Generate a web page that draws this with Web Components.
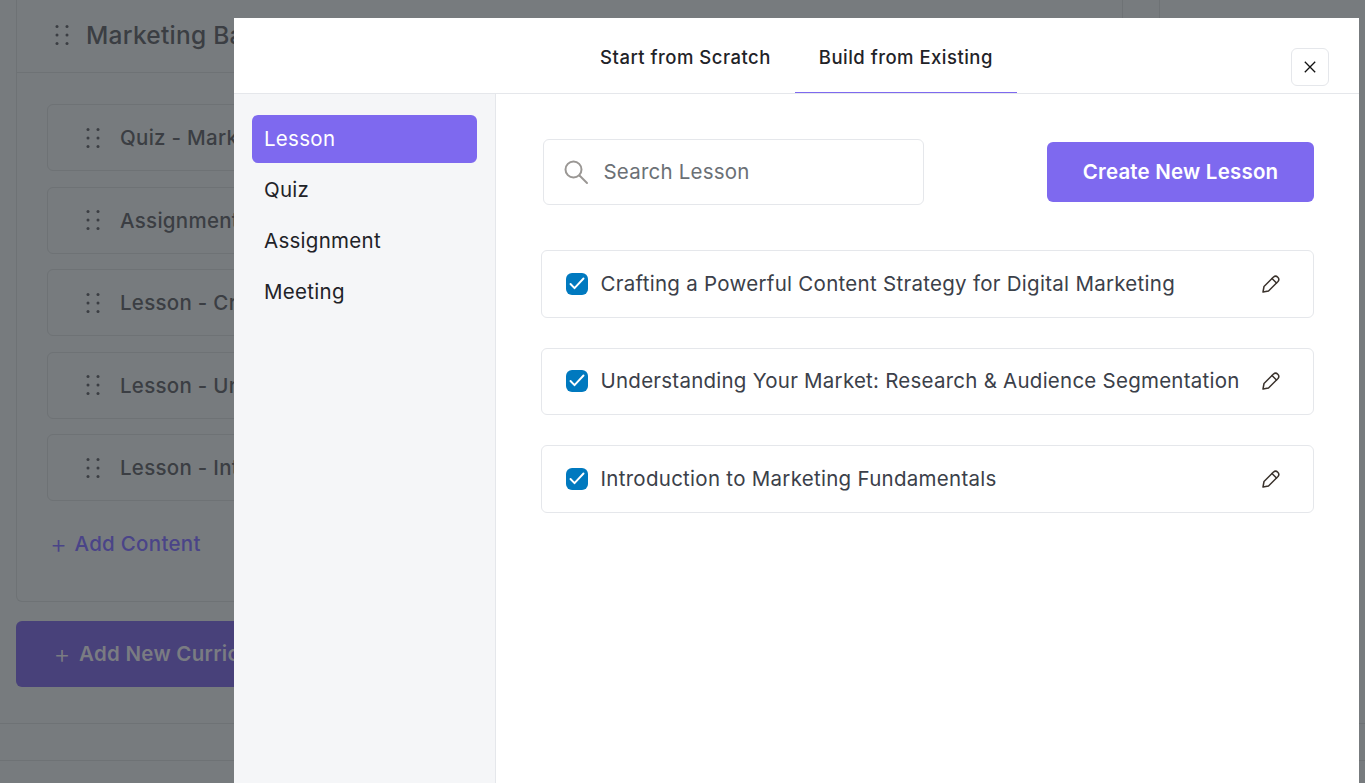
<!DOCTYPE html>
<html><head><meta charset="utf-8">
<style>
html,body{margin:0;padding:0;height:100%;overflow:hidden;background:#777b7e;font-family:Inter,"Liberation Sans",sans-serif}
</style></head><body>
<app-root></app-root>
<template id="dots"><svg width="14" height="22" viewBox="0 0 14 22" fill="currentColor"><circle cx="2" cy="2.500" r="1.500"/><circle cx="12" cy="2.500" r="1.500"/><circle cx="2" cy="11" r="1.500"/><circle cx="12" cy="11" r="1.500"/><circle cx="2" cy="19.500" r="1.500"/><circle cx="12" cy="19.500" r="1.500"/></svg></template>
<script>
const dots=document.getElementById('dots').innerHTML;
const def=(n,css,html)=>{customElements.define(n,class extends HTMLElement{
  connectedCallback(){ if(this.shadowRoot) return; const r=this.attachShadow({mode:'open'}); r.innerHTML=`<style>${css}</style>`+html;}
});};
def('bg-item',`:host{display:flex;align-items:center;box-sizing:border-box;height:67px;margin-left:30px;border:1px solid #6e7275;border-radius:6px;padding-left:38px;gap:20px;color:#3b3e43;font-size:20.500px;font-weight:500;letter-spacing:.28px;white-space:nowrap;width:600px}
span{display:flex;color:#3b3e43}`,`<span>${dots}</span><slot></slot>`);
def('bg-page',`:host{display:block;height:783px;overflow:hidden;position:relative;color:#3b3e43}
.card{margin-left:16px;width:1107px;height:602px;box-sizing:border-box;border:1px solid #6e7275;border-top:0;border-radius:0 0 6px 6px}
.head{height:73px;box-sizing:border-box;border-bottom:1px solid #6e7275;display:flex;align-items:center;padding:0 0 2px 38px;gap:17px;font-size:24.500px;font-weight:500;letter-spacing:.25px;white-space:nowrap}
.head span{display:flex}
.items{display:flex;flex-direction:column;padding-top:31.250px;gap:15.500px}
.add{display:flex;align-items:center;gap:7.500px;margin:27px 0 0 33px;color:#4a4488;font-size:20.500px;font-weight:500;letter-spacing:.28px}
.add i{font-style:normal;font-weight:300;font-size:26px;letter-spacing:0}
.add i.second{margin-left:24.500px}
.btn{margin:19px 0 0 16px;width:600px;height:66px;background:#48417a;border-radius:6px;color:#7a7c82;display:flex;align-items:center;padding:0 0 1px 37.500px;gap:8.500px;font-size:20.500px;font-weight:600;letter-spacing:.28px;box-sizing:border-box;white-space:nowrap}
.btn i{font-style:normal;font-weight:300;font-size:26px;letter-spacing:0}
.l1{height:0;border-top:1px solid #6e7275;margin-top:36px}
.l2{height:0;border-top:1px solid #6e7275;margin-top:36px}
.v{position:absolute;top:0;height:18px;width:1px;background:#6e7275}`,
`<div class="card"><div class="head"><span>${dots}</span>Marketing Bas</div>
<div class="items"><slot></slot></div>
<div class="add"><i>+</i>Add Content<i class="second">+</i></div></div>
<div class="btn"><i>+</i>Add New Curric</div>
<div class="l1"></div><div class="l2"></div>
<div class="v" style="left:1159px"></div>`);
def('side-item',`:host{display:block;box-sizing:border-box;height:48px;line-height:48px;padding-left:12px;border-radius:6px;font-size:20.500px;letter-spacing:.28px;color:#1f2328;margin-bottom:3px}
:host([active]){background:#7e69ef;color:#fff}`,`<slot></slot>`);
def('lesson-row',`:host{display:flex;align-items:center;box-sizing:border-box;height:var(--rh,68px);padding-bottom:var(--pb,1px);border:1px solid #e5e7eb;border-radius:6px;padding-left:24px;padding-right:32px;font-size:20.500px;letter-spacing:var(--ls,.28px);color:#3b4049;white-space:nowrap}
.c{width:22px;height:22px;border-radius:6px;background:#0079bf;display:flex;align-items:center;justify-content:center;margin-right:12.500px;flex:none}
.t{flex:1}
svg{display:block}`,`<span class="c"><svg width="16" height="13" viewBox="0 0 16 13" fill="none" stroke="#fff" stroke-width="1.900" stroke-linecap="round" stroke-linejoin="round"><path d="M1.500 7 5.500 11.200 14.500 1.500"/></svg></span><span class="t"><slot></slot></span>
<svg width="20" height="20" viewBox="0 0 20 20" fill="none" stroke="#3a322c" stroke-width="1.500" stroke-linejoin="round" stroke-linecap="round"><path d="M2 18 3 12.500 12.500 3a3.200 3.200 0 0 1 4.500 4.500L7.500 17z"/><path d="M11 4.500l4.500 4.500"/></svg>`);
def('lesson-modal',`:host{display:flex;flex-direction:column;position:absolute;left:234px;top:18px;width:1125px;height:765px;background:#fff;color:#1f2328}
.tabs{position:relative;height:76px;box-sizing:border-box;border-bottom:1px solid #e5e7eb;display:flex;justify-content:center}
.tab{height:75px;box-sizing:border-box;padding:0 24px 0;line-height:79px;font-size:18.500px;font-weight:500;letter-spacing:.48px;white-space:nowrap;color:#1f2328}
.tab.on{border-bottom:1px solid #7e69ef}
.x{position:absolute;left:1057px;top:30px;width:38px;height:38px;box-sizing:border-box;border:1px solid #e5e7eb;border-radius:6px;display:flex;align-items:center;justify-content:center}
.body{flex:1;display:flex;min-height:0}
.side{width:262px;box-sizing:border-box;background:#f5f6f8;border-right:1px solid #e5e7eb;padding:21px 18px}
.main{flex:1;padding:45px 45px 0 45px}
.top{display:flex;align-items:center;justify-content:space-between;padding-left:2px;height:66px}
.search{width:381px;height:66px;box-sizing:border-box;border:1px solid #e5e7eb;border-radius:6px;display:flex;align-items:center;padding:0 0 1px 19px;gap:14.500px;font-size:20.500px;letter-spacing:.2px;color:#6b7075}
.cta{width:267px;height:60px;box-sizing:border-box;padding-bottom:1px;background:#7e69ef;color:#fff;border-radius:6px;display:flex;align-items:center;justify-content:center;font-size:20.500px;font-weight:600;letter-spacing:.2px}
.rows{display:flex;flex-direction:column;gap:30px;margin-top:45px}
`,`<div class="tabs"><div class="tab">Start from Scratch</div><div class="tab on">Build from Existing</div>
<div class="x"><svg width="12" height="12" viewBox="0 0 12 12" stroke="#111" stroke-width="1.300" fill="none"><path d="M.8.800l10.400 10.400M11.200.800.800 11.200"/></svg></div></div>
<div class="body"><div class="side"><slot name="side"></slot></div>
<div class="main"><div class="top"><div class="search"><svg width="26" height="26" viewBox="0 0 26 26" fill="none" stroke="#9a9794" stroke-width="2" stroke-linecap="round"><circle cx="10.500" cy="10.500" r="8"/><path d="M16.500 16.500 24 24"/></svg><span>Search Lesson</span></div><div class="cta">Create New Lesson</div></div>
<div class="rows"><slot></slot></div></div></div>`);
def('app-root',`:host{display:block;height:783px;position:relative;overflow:hidden}`,
`<bg-page>
<bg-item>Quiz - Marke</bg-item>
<bg-item>Assignment</bg-item>
<bg-item>Lesson - Cra</bg-item>
<bg-item>Lesson - Un</bg-item>
<bg-item>Lesson - Intr</bg-item>
</bg-page>
<lesson-modal>
<side-item slot="side" active>Lesson</side-item>
<side-item slot="side">Quiz</side-item>
<side-item slot="side">Assignment</side-item>
<side-item slot="side">Meeting</side-item>
<lesson-row>Crafting a Powerful Content Strategy for Digital Marketing</lesson-row>
<lesson-row style="--rh:67px;--pb:2px;--ls:.24px">Understanding Your Market: Research &amp; Audience Segmentation</lesson-row>
<lesson-row>Introduction to Marketing Fundamentals</lesson-row>
</lesson-modal>`);
</script>
</body></html>
